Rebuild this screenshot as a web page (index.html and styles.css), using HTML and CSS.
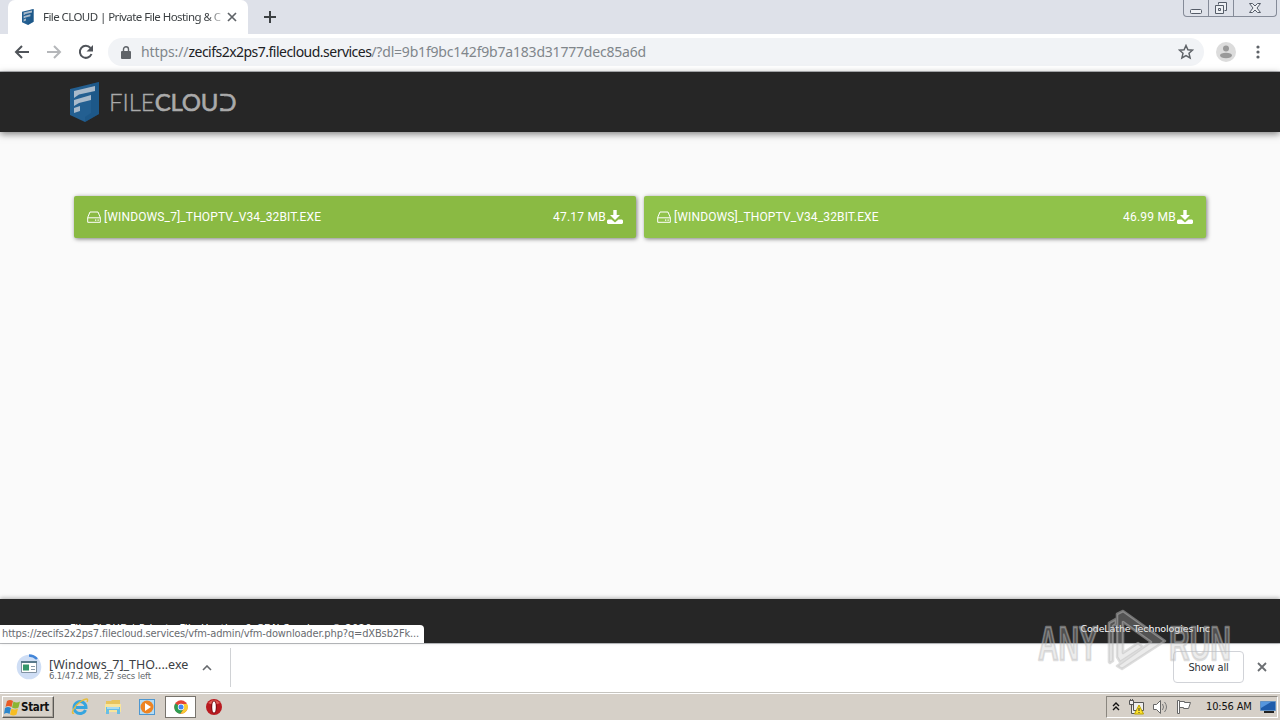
FILE: index.html
```html
<!DOCTYPE html>
<html lang="en">
<head>
<meta charset="utf-8">
<title>File CLOUD | Private File Hosting</title>
<link rel="stylesheet" href="styles.css">
</head>
<body>
<svg class="defs" width="0" height="0">
  <symbol id="shield" viewBox="0 0 30 40"><path fill="#235f91" d="M0 7 29 0v32L15 40 0 33z"/><path fill="#174f80" d="M21 2 29 0v32l-14 8v-5l6-4z" opacity=".45"/><path class="mark" d="M4 9 25 4v5L9 12.500 4 16zM4 18l17-5v5L9 21l-5 3zM4 26l6-2v5l-6 2z"/></symbol>
  <symbol id="drive" viewBox="0 0 14 12"><path fill="none" stroke="currentColor" stroke-width="1" d="M.7 6.500 3 1h8l2.300 5.500v4.800H.7zM.7 6.800h12.600"/><path fill="currentColor" d="M8 8.500h1.300v1.300H8zM10.500 8.500h1.300v1.300h-1.300z"/></symbol>
  <symbol id="download" viewBox="0 0 16 14"><path fill="currentColor" d="M6.300 0h3.400v5H13L8 10 3 5h3.300zM1 9.500h3.500L8 12.500l3.500-3H15l1 1V13l-1 1H1l-1-1v-2.500z"/></symbol>
</svg>
<div class="screen">
  <header class="tabstrip">
    <div class="tab">
      <svg class="favicon"><use href="#shield"/></svg>
      <span class="tab-title">File CLOUD | Private File Hosting &amp; C</span>
      <svg class="tab-close" viewBox="0 0 10 10"><path d="m1 1 8 8M9 1 1 9"/></svg>
    </div>
    <svg class="new-tab" viewBox="0 0 12 12"><path d="M6 0v12M0 6h12"/></svg>
    <div class="window-controls">
      <span><svg width="14" height="14" viewBox="0 0 14 14"><rect x="1.500" y="8.500" width="11" height="4" rx="1"/></svg></span>
      <span><svg width="14" height="14" viewBox="0 0 14 14"><path d="M4.500 3.500v-2h8v8h-2M1.500 4.500h8v8h-8zM4.500 7.500h2v2h-2z"/></svg></span>
      <span><svg width="14" height="14" viewBox="0 0 14 14"><path d="M1.500 2.500h3L7 5l2.500-2.500h3L9 7l3.500 4.500h-3L7 9l-2.500 2.500h-3L5 7z"/></svg></span>
    </div>
  </header>
  <nav class="toolbar">
    <svg class="nav-icon" viewBox="0 0 16 16"><path d="M15 8H2M8 2 2 8l6 6"/></svg>
    <svg class="nav-icon off" viewBox="0 0 16 16"><path d="M1 8h13M8 2l6 6-6 6"/></svg>
    <svg class="nav-icon" viewBox="0 0 16 16"><path d="M13.500 10A6 6 0 1 1 12.500 4"/><path class="solid" d="M15 1v6.500H8.500z"/></svg>
    <div class="address">
      <svg class="lock" viewBox="0 0 10 13"><path fill="#5f6368" d="M1 5h8q1 0 1 1v6q0 1-1 1H1q-1 0-1-1V6q0-1 1-1z"/><path fill="none" stroke="#5f6368" stroke-width="1.400" d="M2.500 5V3.300a2.500 2.500 0 0 1 5 0V5"/></svg>
      <span class="url"><span class="scheme">https://</span><span class="host">zecifs2x2ps7.filecloud.services</span><span class="query">/?dl=9b1f9bc142f9b7a183d31777dec85a6d</span></span>
      <svg class="star" viewBox="0 0 16 16"><path d="m8 1.500 1.900 4.300 4.600.4-3.500 3.100 1.100 4.600L8 11.500l-4.100 2.400L5 9.300 1.500 6.200l4.600-.4z"/></svg>
    </div>
    <svg class="avatar" viewBox="0 0 20 20"><circle cx="10" cy="10" r="10" fill="#dcdcdc"/><circle cx="10" cy="6.500" r="3" fill="#999"/><ellipse cx="10" cy="13.500" rx="6" ry="2.700" fill="#999"/></svg>
    <svg class="menu-dots" viewBox="0 0 4 14"><circle cx="2" cy="2" r="1.600"/><circle cx="2" cy="7" r="1.600"/><circle cx="2" cy="12" r="1.600"/></svg>
  </nav>
  <section class="site-header">
    <svg class="logo-shield"><use href="#shield"/></svg>
    <span class="logo-name"><span class="light">FILE</span><span class="strong">CLOU</span><span class="open-d">D</span></span>
  </section>
  <main class="files">
    <div class="file"><svg class="drive"><use href="#drive"/></svg><span class="name">[WINDOWS_7]_THOPTV_V34_32BIT.EXE</span><span class="size">47.17 MB</span><svg class="dl"><use href="#download"/></svg></div>
    <div class="file second"><svg class="drive"><use href="#drive"/></svg><span class="name">[WINDOWS]_THOPTV_V34_32BIT.EXE</span><span class="size">46.99 MB</span><svg class="dl"><use href="#download"/></svg></div>
  </main>
  <footer class="site-footer">
    <span class="copyright">File CLOUD | Private File Hosting &amp; CDN Services © 2020</span>
    <span class="company">CodeLathe Technologies Inc</span>
    <div class="status"><span>https://zecifs2x2ps7.filecloud.services/vfm-admin/vfm-downloader.php?q=dXBsb2Fk...</span></div>
  </footer>
  <section class="shelf">
    <svg class="progress" viewBox="0 0 26 26"><circle cx="13" cy="13" r="12.300" fill="#cfdef5"/><path d="M13 1.500A11.500 11.500 0 0 1 21 5" fill="none" stroke="#4285d8" stroke-width="2.500"/><path fill="#fff" stroke="#8293a3" d="M5.500 7.500h15v11h-15z"/><path fill="#58798c" d="M5 7h16v2H5z"/><path fill="#33966b" d="M7 10.500h6v6H7z"/><path stroke="#8799a8" d="M15 12.500h4M15 15.500h4"/></svg>
    <div class="download-text"><span class="download-name">[Windows_7]_THO....exe</span><span class="download-state">6.1/47.2 MB, 27 secs left</span></div>
    <svg class="chevron" viewBox="0 0 10 6"><path d="m1 5 4-4 4 4"/></svg>
    <div class="divider"></div>
    <button class="show-all"><span>Show all</span></button>
    <svg class="shelf-close" viewBox="0 0 10 10"><path d="m1 1 8 8M9 1 1 9"/></svg>
  </section>
  <footer class="taskbar">
    <div class="start">
      <svg width="17" height="17" viewBox="0 0 17 17"><path fill="#e95b25" d="M3 2q3-2 6 0L7.500 8Q4 6 1.500 8z"/><path fill="#8bb532" d="M9.500 2.500q3 2 6.500 0l-1.500 6q-3 2-6.500 0z"/><path fill="#2c86cc" d="M1 9q3-2 6 0l-1.500 6q-3-2-5.500 0z"/><path fill="#f7bd23" d="M7.500 9.500q3 2 6.500 0l-1.500 6q-3 2-6.500 0z"/></svg>
      <span>Start</span>
    </div>
    <svg class="task-icon ie" viewBox="0 0 18 18"><path fill="none" stroke="#36a5df" stroke-width="3" d="M14.500 12A6 6 0 1 1 15 9.500H5"/><path fill="none" stroke="#e6bd3b" stroke-width="1.400" d="M3 15C-1 17 3 8 9 4s9-4 7 0"/></svg>
    <svg class="task-icon folder" viewBox="0 0 18 18"><path fill="#e8c45c" d="M2 3h5l1-1h8v12H2z"/><path fill="#f8e59c" d="M1 6h16v8H1z"/><path fill="#68bee5" d="M2 9h14v7h-3v-4H5v4H2z"/><path fill="#a7daf0" d="M3 9h12v2H3z"/></svg>
    <svg class="task-icon media" viewBox="0 0 18 18"><path fill="#4e97d0" d="M1 1h16v16H1z"/><path fill="#b3dcf5" d="M2 2h14v14H2z"/><circle cx="9" cy="9" r="6.500" fill="#ee8422"/><path fill="#fff" d="m7 5 6 4-6 4z"/></svg>
    <div class="active-task"><svg width="14" height="14" viewBox="0 0 14 14"><circle cx="7" cy="7" r="6.700" fill="#e44435"/><path fill="#2e9d51" d="M1.200 3.600A6.700 6.700 0 0 0 6.500 13.700L9.500 9 7 7z"/><path fill="#f8cb32" d="M7 4h6.100A6.700 6.700 0 0 1 6.500 13.700L10 8.500z"/><circle cx="7" cy="7" r="3.200" fill="#fff"/><circle cx="7" cy="7" r="2.500" fill="#4285f4"/></svg></div>
    <svg class="task-icon opera" viewBox="0 0 18 18"><circle cx="9" cy="9" r="8" fill="#b91a20"/><path fill="#e15c55" d="M3 5q6-6 12 0-6 3-12 0"/><ellipse cx="9" cy="9" rx="3" ry="6.500" fill="#7c1015"/><ellipse cx="9" cy="9" rx="1.800" ry="5.500" fill="#fff"/></svg>
    <div class="tray">
      <svg width="8" height="11" viewBox="0 0 8 11"><path class="ink" d="m1 4 3-3 3 3M1 8l3-3 3 3"/></svg>
      <svg class="network" width="16" height="16" viewBox="0 0 16 16"><path fill="#eee" stroke="#555" d="M5.500 3.500h10v8h-10zM1.500 1.500h4v4h-4zM3.500 5.500v9h4"/><path stroke="#555" d="M2.500 0v2M4.500 0v2"/><path fill="#ffe32d" stroke="#b7a000" d="m11 6 4.500 9h-9z"/><path stroke="#333" d="M11 9v3M11 13v1"/></svg>
      <svg class="speaker" width="17" height="16" viewBox="0 0 17 16"><path fill="#fff" stroke="#666" d="M1.500 5.500h3l4-4v13l-4-4h-3z"/><path fill="none" stroke="#777" d="M10.500 5q2 3 0 6M12.500 3q4 5 0 10"/></svg>
      <svg class="flag" width="17" height="17" viewBox="0 0 17 17"><path fill="#fff" stroke="#666" d="M1.500 1.500h2v13h-2zM3.500 2.500h5v1h6l-2 6h-5v-1h-4z"/></svg>
      <span class="clock">10:56 AM</span>
      <svg class="desktop" width="16" height="14" viewBox="0 0 16 14"><path fill="#1f5cab" stroke="#6291c3" d="M.5 1.500h15v9H.5z"/><path fill="#5696dd" d="m1 2 10 0-10 6z"/><path fill="#222" d="M4 11h10v2H4z"/></svg>
    </div>
  </footer>
  <svg class="watermark" width="200" height="70" viewBox="0 0 200 70">
    <g><text x="4" y="51" textLength="60" lengthAdjust="spacingAndGlyphs">ANY</text><text x="135" y="51" textLength="62" lengthAdjust="spacingAndGlyphs">RUN</text>
    <path d="M75 53V14l7-4v5l-3 2v35l-3 2zM83 48V5l6-3 42 30-43 28-5-3 34-24-28-20v31l15-10 5 4-23 15z"/></g>
  </svg>
</div>
</body>
</html>
```
FILE: styles.css
```css
* { box-sizing: border-box; }
body { margin: 0; font-family: "DejaVu Sans Condensed", "DejaVu Sans", sans-serif; }
svg { display: block; flex: none; }
.defs { position: absolute; }
.screen { position: relative; width: 1280px; height: 720px; overflow: hidden; display: flex; flex-direction: column; background: #fafafa; white-space: nowrap; }
.mark { fill: #a9bacb; }
.tabstrip { height: 34px; background: #dee1e9; display: flex; align-items: flex-start; padding-left: 8px; }
.tab { width: 240px; height: 34px; background: #fff; border-radius: 7px 7px 0 0; display: flex; align-items: center; padding-left: 14px; }
.favicon { width: 12px; height: 16px; }
.favicon .mark { fill: #fff; }
.tab-title { width: 178px; margin-left: 9px; font: 11.5px/16px "Noto Sans", sans-serif; letter-spacing: -.57px; color: #3c4043; overflow: hidden; -webkit-mask-image: linear-gradient(90deg, #000 164px, transparent 184px); mask-image: linear-gradient(90deg, #000 164px, transparent 184px); }
.tab-close { width: 10px; height: 10px; margin-left: 6px; fill: none; stroke: #5f6368; stroke-width: 1.7; }
.new-tab { width: 12px; height: 12px; margin: 11px 0 0 16px; stroke: #3c4043; stroke-width: 2; }
.window-controls { display: flex; width: 94px; height: 17px; margin-left: auto; margin-right: 3px; border: 1px solid #858b98; border-top: 0; border-radius: 0 0 4px 4px; }
.window-controls span { display: flex; justify-content: center; width: 25px; padding-top: 1px; border-right: 1px solid #858b98; }
.window-controls span:last-child { width: 42px; border: 0; }
.window-controls svg { fill: #eef0f4; stroke: #555c68; }
.toolbar { height: 38px; background: #fff; border-bottom: 1px solid #b8babd; display: flex; align-items: center; padding: 0 0 1px 14px; }
.nav-icon { width: 16px; height: 16px; margin-right: 16px; fill: none; stroke: #50545a; stroke-width: 2; }
.nav-icon.off { stroke: #b5b7ba; }
.nav-icon .solid { fill: #50545a; stroke: none; }
.address { height: 28px; width: 1096px; margin-left: -2px; border-radius: 14px; background: #f1f3f6; display: flex; align-items: center; padding-left: 13px; }
.lock { width: 10px; height: 13px; }
.url { width: 506px; margin-left: 10px; font: 14px/20px "Noto Sans", sans-serif; color: #80868b; letter-spacing: -.1px; }
.host { color: #202124; letter-spacing: -.52px; }
.query { letter-spacing: -.2px; }
.star { width: 16px; height: 16px; margin-left: auto; margin-right: 10px; fill: none; stroke: #5f6368; stroke-width: 1.5; }
.avatar { width: 20px; height: 20px; margin-left: 12px; }
.menu-dots { width: 4px; height: 14px; margin-left: 20px; fill: #5f6368; }
.site-header { height: 60px; background: #262626; box-shadow: 0 2px 7px rgba(0,0,0,.5); display: flex; align-items: center; padding-left: 70px; }
.logo-shield { width: 30px; height: 40px; }
.logo-name { margin: -1px 0 0 9px; font: 24px/30px Lato, sans-serif; color: #aaa; display: flex; }
.light { font-weight: 300; letter-spacing: -.05px; -webkit-text-stroke: .35px #aaa; }
.strong { letter-spacing: -.2px; -webkit-text-stroke: .6px #aaa; }
.open-d { position: relative; -webkit-text-stroke: .6px #aaa; }
.open-d::before { content: ""; position: absolute; left: 1px; top: 9px; width: 5px; height: 12px; background: #262626; }
.files { flex: 1; display: flex; align-items: flex-start; gap: 8px; padding: 64px 74px 0; }
.file { width: 562px; height: 42px; display: flex; align-items: center; padding: 0 13px; color: #fff; background: #8aba43; box-shadow: 1px 1px 4px rgba(0,0,0,.5); border-radius: 2px; font: 12px/18px Roboto, sans-serif; }
.file.second { background: #90c24a; }
.drive { width: 14px; height: 12px; margin-right: 3px; }
.name { letter-spacing: .13px; }
.size { margin-left: auto; letter-spacing: .25px; }
.dl { width: 16px; height: 14px; margin-left: 1px; }
.site-footer { position: relative; height: 44px; background: #262626; color: #fff; box-shadow: 0 -1px 4px rgba(0,0,0,.3); display: flex; justify-content: space-between; padding: 23px 70px 0 70px; font: 10px/14px "DejaVu Sans", sans-serif; }
.copyright { letter-spacing: .32px; }
.company { font-size: 9.5px; letter-spacing: -.1px; }
.status { position: absolute; left: 0; bottom: 0; width: 424px; height: 18px; padding-left: 2px; background: #fff; color: #686b70; border-radius: 0 4px 0 0; font: 11px/18px "DejaVu Sans Condensed", sans-serif; letter-spacing: -.14px; }
.shelf { height: 50px; background: #fff; border-top: 1px solid #bfc1c4; border-bottom: 1px solid #c6c4bf; display: flex; align-items: center; padding: 0 0 2px 16px; }
.progress { width: 26px; height: 26px; }
.download-text { display: flex; flex-direction: column; width: 142px; margin: 3px 0 0 7px; }
.download-name { font: 12.500px/13px "Noto Sans", sans-serif; color: #3c4043; letter-spacing: .02px; }
.download-state { font: 9.500px/9px "DejaVu Sans Condensed", sans-serif; color: #63676b; letter-spacing: -.16px; }
.chevron { width: 10px; height: 6px; margin: 2px 0 0 11px; fill: none; stroke: #66696d; stroke-width: 1.600; }
.divider { width: 1px; height: 39px; margin-left: 18px; background: #d0d2d5; }
.show-all { width: 71px; height: 32px; margin-left: auto; background: #fff; border: 1px solid #d1d3d8; border-radius: 4px; padding: 1px 0 0; font: 11px/14px "DejaVu Sans Condensed", sans-serif; color: #303338; letter-spacing: -.15px; }
.shelf-close { width: 10px; height: 10px; margin: 0 13px; fill: none; stroke: #6b6e72; stroke-width: 1.800; }
.taskbar { height: 27px; background: #d6d0c8; border-top: 1px solid #fff; display: flex; align-items: center; padding-left: 2px; }
.start { display: flex; align-items: center; width: 52px; height: 22px; padding-left: 1px; border: 1px solid #fff; border-right-color: #5c5a56; border-bottom-color: #5c5a56; box-shadow: inset -1px -1px #aaa49c; font: bold 11.5px/16px "DejaVu Sans Condensed", sans-serif; color: #111; }
.start span { letter-spacing: -.3px; }
.task-icon { width: 18px; height: 18px; }
.ie { margin-left: 17px; }
.folder { margin-left: 15px; }
.media { margin-left: 16px; }
.active-task { width: 31px; height: 22px; margin-left: 9px; background: #fff; border: 1px solid #77736c; display: flex; align-items: center; justify-content: center; }
.opera { margin-left: 9px; }
.tray { margin-left: auto; margin-right: 2px; width: 172px; height: 22px; display: flex; align-items: center; padding-left: 5px; border: 1px solid #8a867f; border-right-color: #fff; border-bottom-color: #fff; }
.ink { fill: none; stroke: #111; stroke-width: 1.400; }
.network { margin-left: 8px; }
.speaker { margin-left: 8px; }
.flag { margin-left: 7px; }
.clock { margin-left: 13px; width: 48px; font: 11px/14px "DejaVu Sans Condensed", sans-serif; color: #111; letter-spacing: -.15px; }
.desktop { margin-left: 6px; }
.watermark { position: absolute; left: 1034px; top: 609px; pointer-events: none; }
.watermark g { fill: rgba(190,190,190,.3); stroke: rgba(190,190,190,.5); stroke-width: 2.600; stroke-linejoin: round; }
.watermark text { font: bold 49px "Liberation Sans Narrow", "Liberation Sans", sans-serif; }
```
